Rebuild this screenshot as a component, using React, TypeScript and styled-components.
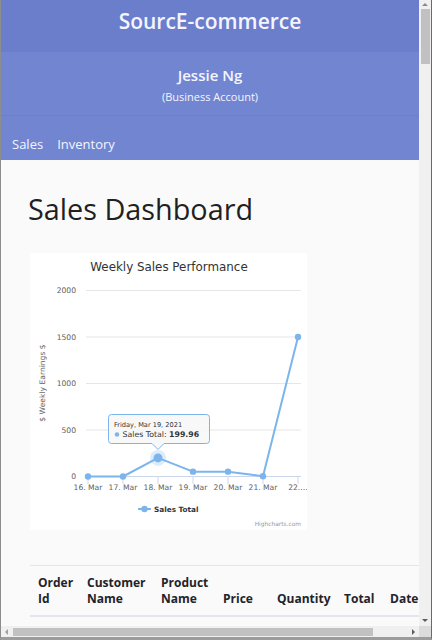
import React from "react";
import styled, { createGlobalStyle } from "styled-components";

const GlobalStyle = createGlobalStyle`
  html, body { margin: 0; padding: 0; overflow: hidden; background: #ffffff; }
  * { box-sizing: border-box; }
`;

const PAGE_FONT = `"Open Sans", "Noto Sans", Arial, sans-serif`;
const CHART_FONT = `"DejaVu Sans", "Liberation Sans", sans-serif`;

const Frame = styled.div`
  width: 432px;
  height: 640px;
  display: grid;
  grid-template-columns: 1fr 12px;
  grid-template-rows: 1fr 11px;
  border-left: 1px solid #8d8d8d;
  border-right: 1px solid #6a6a6a;
  border-bottom: 3px solid #9c9c9c;
  background: #f0f0f0;
`;

const Viewport = styled.div`
  overflow: hidden;
  background: #fafafa;
  font-family: ${PAGE_FONT};
`;

const Page = styled.div`
  width: 418px;
`;

const TopBar = styled.header`
  height: 52px;
  padding-top: 6px;
  background: #6b7ecb;
  color: #f4f5ff;
  text-align: center;
  font-size: 21px;
  font-weight: 600;
  line-height: 30px;
`;

const Profile = styled.section`
  background: #7285d1;
  color: #f4f5ff;
  text-align: center;
  padding: 13px 0 11px;
  border-bottom: 1px solid #6c7fcb;
  display: flex;
  flex-direction: column;
  gap: 4px;
`;

const ProfileName = styled.div`
  font-size: 15px;
  font-weight: 600;
  line-height: 20px;
`;

const ProfileRole = styled.div`
  font-size: 11px;
  line-height: 15px;
`;

const Nav = styled.nav`
  background: #7285d1;
  height: 44px;
  padding: 19px 0 0 11px;
  display: flex;
  gap: 14px;
`;

const NavLink = styled.a`
  color: #f4f5ff;
  font-size: 13px;
  line-height: 18px;
  text-decoration: none;
`;

const Content = styled.main`
  padding: 0 0 0 27px;
`;

const Title = styled.h1`
  margin: 31px 0 26px;
  font-size: 28.8px;
  font-weight: 400;
  line-height: 36px;
  color: #1f1f24;
  white-space: nowrap;
`;

const ChartBox = styled.div`
  margin-left: 2px;
  width: 277px;
  height: 277px;
  background: #ffffff;
`;

const Table = styled.table`
  margin: 35px 0 0 2px;
  border-collapse: collapse;
  table-layout: fixed;
  width: 440px;
`;

const HeadCell = styled.th<{ $w: number }>`
  width: ${(p) => p.$w}px;
  padding: 9px 8px 8px;
  text-align: left;
  vertical-align: bottom;
  font-size: 12px;
  font-weight: 700;
  line-height: 16px;
  color: #23232a;
  border-top: 1px solid #e3e6ec;
  border-bottom: 2px solid #e3e6ec;
  white-space: normal;
`;

const VScroll = styled.div`
  display: flex;
  flex-direction: column;
  align-items: stretch;
  background: #f0f0f0;
`;

const HScroll = styled.div`
  display: flex;
  flex-direction: row;
  align-items: center;
  background: #f0f0f0;
`;

const Corner = styled.div`
  background: #dcdcdc;
`;

const ArrowCell = styled.div<{ $w?: number; $h?: number }>`
  display: flex;
  align-items: center;
  justify-content: center;
  flex: 0 0 auto;
  width: ${(p) => (p.$w ? `${p.$w}px` : "auto")};
  height: ${(p) => (p.$h ? `${p.$h}px` : "auto")};
`;

const Tri = styled.span<{ $dir: "up" | "down" | "left" | "right" }>`
  width: 0;
  height: 0;
  border: 3px solid transparent;
  ${(p) =>
    p.$dir === "up"
      ? "border-bottom-color:#8a8a8a; border-top-width:0;"
      : p.$dir === "down"
      ? "border-top-color:#5c5c5c; border-bottom-width:0;"
      : p.$dir === "left"
      ? "border-right-color:#a0a0a0; border-left-width:0;"
      : "border-left-color:#5c5c5c; border-right-width:0;"}
`;

const VThumb = styled.div`
  margin: 1px 1px 0 2px;
  height: 55px;
  background: #c1c1c1;
`;

const HThumb = styled.div`
  margin-left: 1px;
  width: 360px;
  height: 8px;
  background: #c1c1c1;
`;

const Spacer = styled.div`
  flex: 1;
`;

const xs = [58, 93, 128, 163, 198, 233, 268];
const vals = [0, 0, 199.96, 52, 52, 3, 1500];
const labels = ["16. Mar", "17. Mar", "18. Mar", "19. Mar", "20. Mar", "21. Mar", "22.\u2026"];
const yOf = (v: number) => 223.5 - v * 0.093;
const grid = [
  { v: "2000", y: 37.5 },
  { v: "1500", y: 84 },
  { v: "1000", y: 130.5 },
  { v: "500", y: 177 },
  { v: "0", y: 223.5 },
];
const BLUE = "#7cb5ec";

function SalesChart() {
  const pts = xs.map((x, i) => `${x},${yOf(vals[i])}`).join(" ");
  return (
    <svg width="277" height="277" viewBox="0 0 277 277" fontFamily={CHART_FONT}>
      <text x="139" y="18" textAnchor="middle" fontSize="11.9" fill="#333333">
        Weekly Sales Performance
      </text>
      {grid.map((g) => (
        <g key={g.v}>
          {g.v !== "0" && <line x1="56" x2="271" y1={g.y} y2={g.y} stroke="#e6e6e6" strokeWidth="1" />}
          <text x="46" y={g.y + 2.7} textAnchor="end" fontSize="7.6" fill="#606060">
            {g.v}
          </text>
        </g>
      ))}
      <line x1="56" x2="271" y1="223.5" y2="223.5" stroke="#ccd6eb" strokeWidth="1" />
      {xs.map((x, i) => (
        <g key={x}>
          <line x1={x} x2={x} y1="223.5" y2="231" stroke="#ccd6eb" strokeWidth="1" />
          <text x={x} y="237" textAnchor="middle" fontSize="7.6" fill="#606060">
            {labels[i]}
          </text>
        </g>
      ))}
      <text
        transform="translate(15,130) rotate(-90)"
        textAnchor="middle"
        fontSize="7.6"
        fill="#606060"
      >
        $ Weekly Earnings $
      </text>
      <polyline points={pts} fill="none" stroke={BLUE} strokeWidth="2" strokeLinejoin="round" strokeLinecap="round" />
      <circle cx={xs[2]} cy={yOf(vals[2])} r="8" fill={BLUE} opacity="0.25" />
      {xs.map((x, i) => (
        <circle key={x} cx={x} cy={yOf(vals[i])} r={i === 2 ? 4.5 : 3.2} fill={BLUE} />
      ))}
      <path
        d="M 81.5 161.5 L 176.5 161.5 Q 179.5 161.5 179.5 164.5 L 179.5 187.5 Q 179.5 190.5 176.5 190.5 L 134 190.5 L 128 196.5 L 122 190.5 L 81.5 190.5 Q 78.5 190.5 78.5 187.5 L 78.5 164.5 Q 78.5 161.5 81.5 161.5 Z"
        fill="rgba(247,247,247,0.9)"
        stroke={BLUE}
        strokeWidth="1"
      />
      <text x="84" y="174" fontSize="6.6" fill="#333333">
        Friday, Mar 19, 2021
      </text>
      <circle cx="87" cy="181.5" r="2.3" fill={BLUE} />
      <text x="92.5" y="184.3" fontSize="7.8" fill="#333333">
        Sales Total: <tspan fontWeight="bold">199.96</tspan>
      </text>
      <line x1="108" x2="121" y1="256" y2="256" stroke={BLUE} strokeWidth="2" />
      <circle cx="114.5" cy="256" r="3.2" fill={BLUE} />
      <text x="124" y="259" fontSize="7.3" fontWeight="bold" fill="#333333">
        Sales Total
      </text>
      <text x="271" y="273" textAnchor="end" fontSize="5.9" fill="#999999">
        Highcharts.com
      </text>
    </svg>
  );
}

const columns: { label: React.ReactNode; w: number }[] = [
  { label: <>Order<br />Id</>, w: 49 },
  { label: <>Customer<br />Name</>, w: 74 },
  { label: <>Product<br />Name</>, w: 62 },
  { label: "Price", w: 54 },
  { label: "Quantity", w: 67 },
  { label: "Total", w: 46 },
  { label: "Date", w: 88 },
];

export default function App() {
  return (
    <>
      <GlobalStyle />
      <Frame>
        <Viewport>
          <Page>
            <TopBar>SourcE-commerce</TopBar>
            <Profile>
              <ProfileName>Jessie Ng</ProfileName>
              <ProfileRole>(Business Account)</ProfileRole>
            </Profile>
            <Nav>
              <NavLink href="#">Sales</NavLink>
              <NavLink href="#">Inventory</NavLink>
            </Nav>
            <Content>
              <Title>Sales Dashboard</Title>
              <ChartBox>
                <SalesChart />
              </ChartBox>
              <Table>
                <thead>
                  <tr>
                    {columns.map((c, i) => (
                      <HeadCell key={i} $w={c.w}>
                        {c.label}
                      </HeadCell>
                    ))}
                  </tr>
                </thead>
              </Table>
            </Content>
          </Page>
        </Viewport>
        <VScroll>
          <ArrowCell $h={8}>
            <Tri $dir="up" />
          </ArrowCell>
          <VThumb />
          <Spacer />
          <ArrowCell $h={12}>
            <Tri $dir="down" />
          </ArrowCell>
        </VScroll>
        <HScroll>
          <ArrowCell $w={11}>
            <Tri $dir="left" />
          </ArrowCell>
          <HThumb />
          <Spacer />
          <ArrowCell $w={12}>
            <Tri $dir="right" />
          </ArrowCell>
        </HScroll>
        <Corner />
      </Frame>
    </>
  );
}
